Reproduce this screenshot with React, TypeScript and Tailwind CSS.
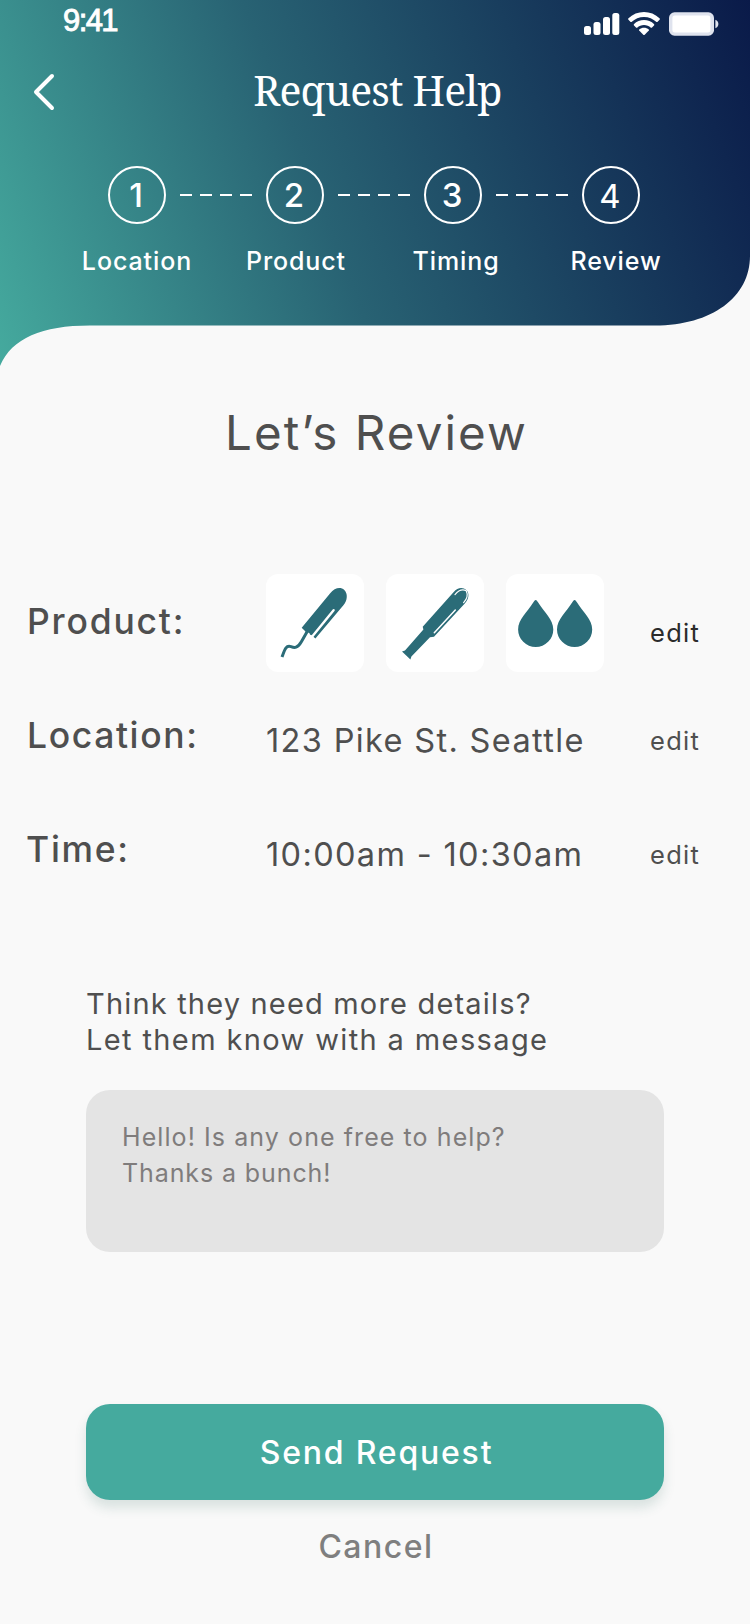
import * as React from "react";

const steps = ["Location", "Product", "Timing", "Review"];

function StatusBar() {
  return (
    <div className="flex h-[66px] items-start justify-between pl-[63px] pr-[31px]">
      <span className="mt-[6px] font-['Liberation_Sans',sans-serif] text-[31px] leading-[30px] tracking-[-1.6px] [-webkit-text-stroke:0.9px_white]">
        9:41
      </span>
      <div className="mt-3 flex items-start">
        <svg width="36" height="24" viewBox="0 0 36 24" fill="white">
          <rect x="0" y="14" width="7" height="9" rx="2.5" />
          <rect x="9.5" y="10" width="7" height="13" rx="2.5" />
          <rect x="19" y="5" width="7" height="18" rx="2.5" />
          <rect x="28.3" y="1" width="7" height="22" rx="2.5" />
        </svg>
        <svg className="ml-2" width="32" height="23" viewBox="0 0 17 12.2" fill="white">
          <path d="M8.5 2.6C10.97 2.6 13.34 3.56 15.13 5.29H15.6L16.9 3.96V3.44C12.2-1.15 4.8-1.15 0.1 3.44V3.96L1.4 5.29H1.87C3.66 3.56 6.03 2.6 8.5 2.6Z" />
          <path d="M8.5 6.9C9.85 6.9 11.16 7.4 12.16 8.32H12.65L13.93 6.99V6.46C10.87 3.5 6.14 3.5 3.08 6.46V6.99L4.36 8.32H4.85C5.85 7.4 7.15 6.9 8.5 6.9Z" />
          <path d="M11.07 9.28V9.8L8.75 12.2H8.25L5.93 9.8V9.28C7.41 8.03 9.59 8.03 11.07 9.28Z" />
        </svg>
        <svg className="ml-[9px]" width="50" height="24" viewBox="0 0 50 24">
          <rect x="0" y="0.3" width="45" height="23.4" rx="5.5" fill="#dfe3ee" />
          <rect x="3.4" y="3.6" width="38" height="16.8" rx="2.5" fill="white" />
          <path d="M46.4 7.8C48.4 8.6 49.4 10.2 49.4 12S48.4 15.4 46.4 16.2Z" fill="#dfe3ee" />
        </svg>
      </div>
    </div>
  );
}

function Stepper() {
  return (
    <>
      <div className="mt-[52px] flex items-center pl-[108px]">
        {steps.map((step, i) => (
          <React.Fragment key={step}>
            {i > 0 && (
              <div className="mx-[14px] flex w-[72px] justify-between">
                <span className="h-[2px] w-3 bg-white" />
                <span className="h-[2px] w-3 bg-white" />
                <span className="h-[2px] w-3 bg-white" />
                <span className="h-[2px] w-3 bg-white" />
              </div>
            )}
            <div
              className={
                i === 3
                  ? "flex size-[58px] items-center justify-center rounded-full border-2 border-white pr-[2px] pt-[3px] text-[33px] leading-none"
                  : "flex size-[58px] items-center justify-center rounded-full border-2 border-white pr-[2px] text-[33px] font-medium leading-none"
              }
            >
              {i + 1}
            </div>
          </React.Fragment>
        ))}
      </div>
      <div className="mt-[22px] grid grid-cols-[158px_160px_160px_160px] pl-[58px] text-center text-[25px] font-medium leading-[30px] tracking-[0.9px]">
        {steps.map((step) => (
          <span key={step}>{step}</span>
        ))}
      </div>
    </>
  );
}

function Header() {
  return (
    <header className="h-[366px] bg-linear-[69deg,#45aa9e_0%,#286273_43%,#0a1a49_100%] text-white [clip-path:path('M0_0H750V256C750_297_712_325.5_655_325.5H90C42_325.5_12_338_0_366Z')]">
      <StatusBar />
      <div className="grid h-12 grid-cols-[60px_1fr_60px] items-center">
        <svg
          className="ml-8 mt-1"
          width="24"
          height="38"
          viewBox="0 0 24 38"
          fill="none"
          stroke="white"
          strokeWidth="4"
          strokeLinecap="round"
          strokeLinejoin="round"
        >
          <path d="M20 3L4 19L20 35" />
        </svg>
        <h1 className="pl-[5px] text-center font-['Noto_Serif','DejaVu_Serif_Condensed',serif] text-[41px] leading-[48px] tracking-[-0.8px]">
          Request Help
        </h1>
      </div>
      <Stepper />
    </header>
  );
}

function TamponIcon() {
  return (
    <svg width="98" height="98" viewBox="0 0 98 98">
      <path
        d="M35.7 53.7L64.2 19.2C68.5 13.8 74.5 12.5 78.3 15.9C82 19.3 81.5 26.3 77.6 31L49.4 64.5L42.4 58.6L41 59Z"
        fill="#2b6c78"
      />
      <path d="M44.8 64.2L67.6 36.3" stroke="white" strokeWidth="2.4" strokeLinecap="round" />
      <path d="M44.3 60.6L47 57.4" stroke="#2b6c78" strokeWidth="1.4" />
      <path
        d="M41.5 57L35.5 67.5C31.5 74.5 28.5 74 25 72.6C20 70.6 18.5 76 16 83"
        stroke="#2b6c78"
        strokeWidth="3"
        fill="none"
      />
    </svg>
  );
}

function ApplicatorIcon() {
  return (
    <svg width="98" height="98" viewBox="0 0 98 98">
      <path
        d="M36.7 52.7L67.5 18.2C72 13 77 13 80.5 16.3C83.5 19.5 83 24.8 79 29.3L48 62.8L44 63.2L25.4 82.6L24.4 85.5L16 77.4L19 76.4L37.4 55.6Z"
        fill="#2b6c78"
      />
      <path d="M48.3 58.7L69.3 36" stroke="white" strokeWidth="1.5" strokeLinecap="round" />
      <path
        d="M69 20.6C72.5 16.4 76.5 15 80.2 16.8C82 20.5 81.2 24.8 77.6 28.6"
        stroke="white"
        strokeWidth="1.2"
        fill="none"
        strokeLinecap="round"
      />
    </svg>
  );
}

function DropsIcon() {
  return (
    <svg width="98" height="98" viewBox="0 0 98 98" fill="#2b6c78">
      <path d="M29.7 26C30.7 26 31.2 27 32 28.3C38 38 47.3 45.6 47.3 55.4A17.6 17.6 0 0 1 12.1 55.4C12.1 45.6 21.4 38 27.4 28.3C28.2 27 28.7 26 29.7 26Z" />
      <path d="M68.6 26C69.6 26 70.1 27 70.9 28.3C76.9 38 86.2 45.6 86.2 55.4A17.6 17.6 0 0 1 51 55.4C51 45.6 60.3 38 66.3 28.3C67.1 27 67.6 26 68.6 26Z" />
    </svg>
  );
}

function Tile({ children }: { children: React.ReactNode }) {
  return <div className="size-[98px] overflow-hidden rounded-xl bg-white">{children}</div>;
}

function Details() {
  return (
    <section className="mt-[113px] text-[32.5px] leading-10 tracking-[1.35px]">
      <div className="grid h-[142px] grid-cols-[239px_384px_1fr] items-start pl-[27px]">
        <h3 className="mt-[28px] text-[35.5px] font-medium tracking-[1.8px]">Product:</h3>
        <div className="flex gap-[22px]">
          <Tile>
            <TamponIcon />
          </Tile>
          <Tile>
            <ApplicatorIcon />
          </Tile>
          <Tile>
            <DropsIcon />
          </Tile>
        </div>
        <button className="mt-[44px] justify-self-start text-[25.5px] leading-[30px] tracking-[1.3px] text-[#2b2b2b]">
          edit
        </button>
      </div>
      <div className="grid h-[114px] grid-cols-[239px_384px_1fr] items-start pl-[27px]">
        <h3 className="text-[35.5px] font-medium tracking-[1.6px]">Location:</h3>
        <p className="mt-[5px]">123 Pike St. Seattle</p>
        <button className="mt-[10px] justify-self-start text-[25.5px] leading-[30px] tracking-[1.3px]">edit</button>
      </div>
      <div className="grid h-[113px] grid-cols-[239px_384px_1fr] items-start pl-[27px]">
        <h3 className="-ml-px text-[35.5px] font-medium tracking-[1.7px]">Time:</h3>
        <p className="mt-[5px]">10:00am - 10:30am</p>
        <button className="mt-[10px] justify-self-start text-[25.5px] leading-[30px] tracking-[1.3px]">edit</button>
      </div>
    </section>
  );
}

export default function App() {
  return (
    <div className="h-[1624px] w-[750px] overflow-hidden bg-[#f9f9f9] font-[Inter,sans-serif] text-[#4f4f4f]">
      <Header />
      <h2 className="mt-[39px] pl-[3px] text-center text-[47.5px] leading-[56px] tracking-[2.1px]">Let’s Review</h2>
      <Details />
      <div className="mt-[43px] px-[86px]">
        <p className="text-[29px] leading-9 tracking-[1.18px]">Think they need more details?</p>
        <p className="text-[29px] leading-9 tracking-[1.38px]">Let them know with a message</p>
        <div className="mt-8 h-[162px] rounded-3xl bg-[#e4e4e4] pl-[36px] pt-[29px] text-[25px] leading-9 text-[#7f7c7c]">
          <p className="tracking-[1.08px]">Hello! Is any one free to help?</p>
          <p className="tracking-[0.9px]">Thanks a bunch!</p>
        </div>
        <button className="mt-[152px] flex h-24 w-full items-center justify-center rounded-3xl bg-[#45aa9e] pl-[3px] pt-px text-[32px] font-medium tracking-[1.8px] text-white shadow-[0_8px_12px_rgba(40,98,90,0.15)]">
          Send Request
        </button>
        <button className="mt-[27px] block w-full pl-[2px] text-center text-[32px] font-medium leading-10 tracking-[1.5px] text-[#7f7f7f]">
          Cancel
        </button>
      </div>
    </div>
  );
}
